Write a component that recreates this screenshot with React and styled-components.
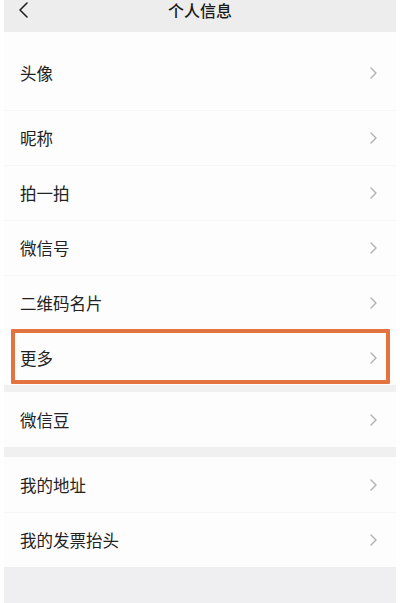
import React from "react";
import styled, { createGlobalStyle } from "styled-components";

const Global = createGlobalStyle`
  html, body { margin: 0; padding: 0; background: #ffffff; }
  body { font-family: "Noto Sans CJK SC", "Noto Sans", sans-serif; }
`;

const Page = styled.div`
  width: 400px;
  height: 603px;
  padding: 0 4px;
  box-sizing: border-box;
  display: flex;
  flex-direction: column;
  background: #ffffff;
  overflow: hidden;
`;

const Header = styled.div`
  height: 32px;
  flex: none;
  background: #ededed;
  display: flex;
  align-items: flex-start;
  justify-content: center;
  position: relative;
`;

const Title = styled.div`
  font-size: 16px;
  font-weight: 500;
  color: #1a1a1a;
  line-height: 18px;
  margin-top: 1px;
`;

const Back = styled.svg`
  position: absolute;
  left: 13px;
  top: 1px;
`;

const Section = styled.div`
  background: #fdfdfe;
  display: flex;
  flex-direction: column;
`;

const Gap = styled.div`
  height: ${(p) => p.h}px;
  background: #f0f0f1;
  flex: none;
`;

const Row = styled.div`
  height: ${(p) => p.h || 55}px;
  display: flex;
  align-items: center;
  justify-content: space-between;
  padding: ${(p) => (p.h ? "4px" : "0")} 18px 0 16px;
  box-sizing: border-box;
  position: relative;
  & + & {
    border-top: 1px solid #f7f7f8;
  }
  ${(p) =>
    p.mark &&
    `
    &::after {
      content: "";
      position: absolute;
      left: 7px;
      right: 6px;
      top: -2px;
      bottom: 1px;
      border: 4px solid #e3743f;
      border-radius: 1px;
    }
  `}
`;

const Label = styled.span`
  font-size: 16.5px;
  color: #222222;
  line-height: 20px;
`;

const Rest = styled.div`
  flex: 1;
  background: #efeef1;
`;

const Chevron = () => (
  <svg width="9" height="14" viewBox="0 0 9 14">
    <path d="M2 2 L7 7 L2 12" fill="none" stroke="#b0b0b0" strokeWidth="1.4" strokeLinecap="round" strokeLinejoin="round" />
  </svg>
);

const Item = ({ label, h, mark }) => (
  <Row h={h} mark={mark}>
    <Label>{label}</Label>
    <Chevron />
  </Row>
);

export default function App() {
  return (
    <>
      <Global />
      <Page>
        <Header>
          <Back width="14" height="18" viewBox="0 0 14 18">
            <path d="M10 2 L3 9 L10 16" fill="none" stroke="#222" strokeWidth="1.6" strokeLinecap="round" strokeLinejoin="round" />
          </Back>
          <Title>个人信息</Title>
        </Header>
        <Section>
          <Item label="头像" h={78} />
          <Item label="昵称" />
          <Item label="拍一拍" />
          <Item label="微信号" />
          <Item label="二维码名片" />
          <Item label="更多" mark />
        </Section>
        <Gap h={7} />
        <Section>
          <Item label="微信豆" />
        </Section>
        <Gap h={10} />
        <Section>
          <Item label="我的地址" />
          <Item label="我的发票抬头" />
        </Section>
        <Rest />
      </Page>
    </>
  );
}
